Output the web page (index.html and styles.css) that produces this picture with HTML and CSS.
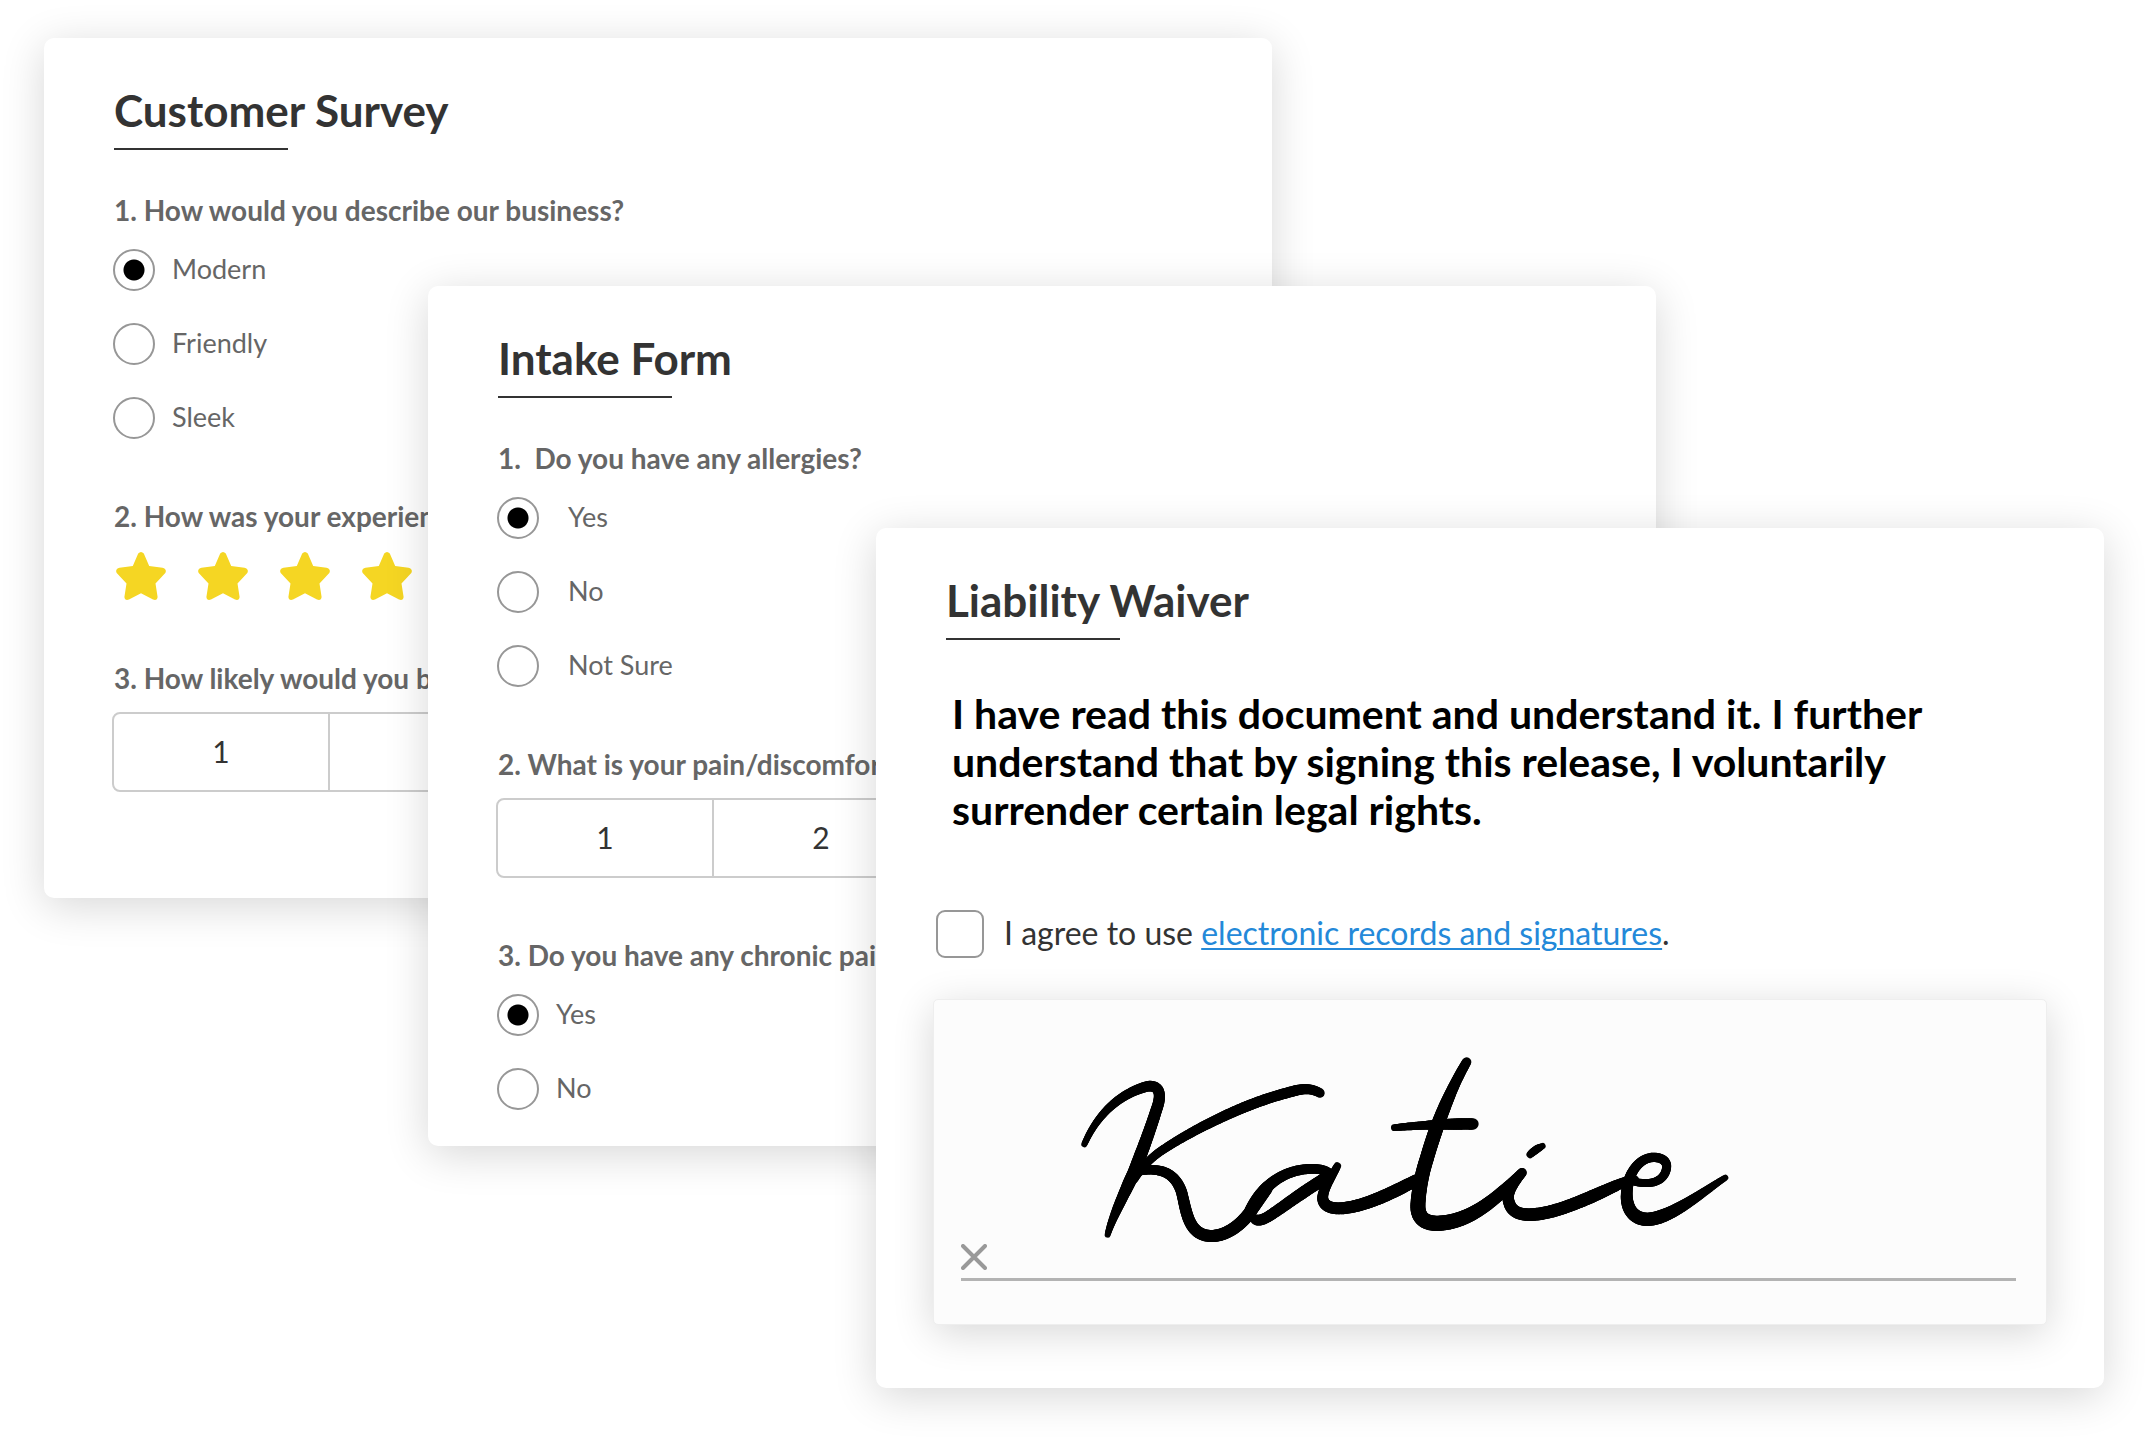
FILE: index.html
```html
<!DOCTYPE html>
<html lang="en">
    <head>
        <meta charset="UTF-8" />
        <meta name="viewport" content="width=device-width, initial-scale=1.0" />
        <title>Forms</title>
        <link rel="stylesheet" href="styles.css">
    </head>
    <body>
        <svg class="defs" aria-hidden="true">
            <symbol id="star" viewBox="0 0 50 48">
                <path d="M22.2 1.6Q25-1.4 27.8 1.6L33.2 14L46.5 15.7Q51.2 17 49.3 21L39.5 31.4L41.6 45Q41.2 49 37 47.6L25 41.2L13 47.6Q8.8 49 8.4 45L10.5 31.4L.7 21Q-1.2 17 3.5 15.7L16.8 14Z" />
            </symbol>
        </svg>

        <main class="stack">
            <form class="card survey">
                <h2 class="title">Customer Survey</h2>
                <fieldset class="question">
                    <legend>1. How would you describe our business?</legend>
                    <div class="options">
                        <label class="option"><input type="radio" name="style" checked /> Modern</label>
                        <label class="option"><input type="radio" name="style" /> Friendly</label>
                        <label class="option"><input type="radio" name="style" /> Sleek</label>
                    </div>
                </fieldset>
                <fieldset class="question">
                    <legend>2. How was your experien</legend>
                    <div class="stars">
                        <button type="button" class="star" aria-label="1 star"><svg><use href="#star" /></svg></button>
                        <button type="button" class="star" aria-label="2 stars"><svg><use href="#star" /></svg></button>
                        <button type="button" class="star" aria-label="3 stars"><svg><use href="#star" /></svg></button>
                        <button type="button" class="star" aria-label="4 stars"><svg><use href="#star" /></svg></button>
                    </div>
                </fieldset>
                <fieldset class="question">
                    <legend>3. How likely would you b</legend>
                    <div class="scale">
                        <button type="button">1</button>
                    </div>
                </fieldset>
            </form>

            <form class="card intake">
                <h2 class="title">Intake Form</h2>
                <fieldset class="question">
                    <legend>1.&nbsp; Do you have any allergies?</legend>
                    <div class="options wide">
                        <label class="option"><input type="radio" name="allergies" checked /> Yes</label>
                        <label class="option"><input type="radio" name="allergies" /> No</label>
                        <label class="option"><input type="radio" name="allergies" /> Not Sure</label>
                    </div>
                </fieldset>
                <fieldset class="question">
                    <legend>2. What is your pain/discomfor</legend>
                    <div class="scale">
                        <button type="button">1</button>
                        <button type="button">2</button>
                    </div>
                </fieldset>
                <fieldset class="question">
                    <legend>3. Do you have any chronic pai</legend>
                    <div class="options">
                        <label class="option"><input type="radio" name="chronic" checked /> Yes</label>
                        <label class="option"><input type="radio" name="chronic" /> No</label>
                    </div>
                </fieldset>
            </form>

            <form class="card waiver">
                <h2 class="title">Liability Waiver</h2>
                <p class="statement">I have read this document and understand it. I further understand that by signing this release, I voluntarily surrender certain legal rights.</p>
                <div class="agree">
                    <input type="checkbox" id="agree" />
                    <label for="agree">I agree to use <a href="#">electronic records and signatures</a>.</label>
                </div>
                <div class="signature">
                    <svg class="ink" id="ink" viewBox="0 0 2070 720" role="img" aria-label="Signature"></svg>
                    <div class="sign-line">
                        <button type="button" class="clear" aria-label="Clear signature">
                            <svg viewBox="0 0 26 26"><path d="M2 2L24 24M24 2L2 24" /></svg>
                        </button>
                    </div>
                </div>
            </form>
        </main>

        <script src="signature.js"></script>
    </body>
</html>
```
FILE: signature.js
```js
const SVG = "http://www.w3.org/2000/svg";
const ink = document.getElementById("ink");

// each pen stroke: its path and the pen widths spread evenly along it
const strokes = [
    ["M73 346C110 260 175 195 262 172C305 166 303 205 290 240C268 310 245 370 222 430C190 500 155 570 143 617", [18, 22, 27, 31, 34, 36, 38, 38, 30, 18]],
    ["M780 192C745 172 715 182 680 192C560 222 400 300 300 368C265 393 238 425 222 452", [28, 32, 32, 32, 31, 29, 27, 25, 24]],
    ["M228 428C300 412 345 430 365 490C380 550 385 618 452 621C500 622 545 585 570 550C600 480 660 425 745 420C780 418 800 424 808 434", [26, 30, 33, 35, 36, 37, 38, 36, 32, 30, 28]],
    ["M573 545L620 477", [38, 38]],
    ["M587 572C615 583 655 535 800 445", [32, 34, 36, 36]],
    ["M832 411C812 450 788 480 788 508C790 530 810 539 842 538C910 534 990 495 1070 453", [22, 28, 34, 36, 37, 38, 38, 36]],
    ["M1220 99C1160 200 1120 320 1100 390C1080 450 1072 520 1074 540C1078 572 1100 583 1132 583C1230 580 1310 510 1386 431", [28, 32, 38, 42, 42, 43, 45, 46, 44, 40, 36, 28]],
    ["M1003 296C1090 288 1170 284 1239 285", [20, 23, 26, 31, 34, 34]],
    ["M1386 431C1345 480 1340 500 1347 520C1355 550 1380 557 1410 557C1490 555 1590 505 1690 460C1705 454 1715 452 1725 452", [28, 33, 36, 38, 38, 38, 38, 34, 24]],
    ["M1410 377Q1425 362 1448 351", [20, 24, 24, 18]],
    ["M1704 450C1720 460 1745 463 1765 462C1800 460 1820 438 1820 410C1818 392 1800 385 1780 385C1740 387 1712 425 1704 465C1690 530 1715 571 1763 571C1830 568 1920 495 1996 446", [22, 24, 26, 28, 28, 30, 34, 38, 40, 40, 36, 30, 24, 18]],
];

function widthAt(widths, t) {
    const pos = t * (widths.length - 1);
    const i = Math.min(Math.floor(pos), widths.length - 2);
    return widths[i] + (widths[i + 1] - widths[i]) * (pos - i);
}

strokes.forEach(([d, widths]) => {
    const path = document.createElementNS(SVG, "path");
    path.setAttribute("d", d);
    const length = path.getTotalLength();
    const steps = Math.ceil(length / 5);

    let from = path.getPointAtLength(0);
    for (let i = 1; i <= steps; i++) {
        const to = path.getPointAtLength((length * i) / steps);
        const line = document.createElementNS(SVG, "line");
        line.setAttribute("x1", from.x);
        line.setAttribute("y1", from.y);
        line.setAttribute("x2", to.x);
        line.setAttribute("y2", to.y);
        line.setAttribute("stroke-width", widthAt(widths, i / steps));
        ink.appendChild(line);
        from = to;
    }
});
```
FILE: styles.css
```css
* {
    box-sizing: border-box;
}
body {
    margin: 0;
    background: #fff;
    font-family: Lato, "Open Sans", sans-serif;
    color: #333;
}
.defs {
    display: none;
}

/* the three cards share one grid row and overlap */
.stack {
    display: grid;
    grid-template-columns: 384fr 448fr 396fr 384fr 448fr;
    align-items: start;
    padding: 38px 44px 50px;
}
.card {
    grid-row: 1;
    min-width: 0;
    min-height: 860px;
    padding: 47px 78px 36px 70px;
    background: #fff;
    border-radius: 10px;
    box-shadow: 0 8px 44px rgba(0, 0, 0, 0.16);
}
.survey {
    grid-column: 1 / 4;
}
.intake {
    grid-column: 2 / 5;
    margin-top: 248px;
}
.waiver {
    grid-column: 3 / 6;
    margin-top: 490px;
}

.title {
    margin: 0 0 44px;
    font-size: 44px;
    line-height: 50px;
    font-weight: 700;
}
.title::after {
    content: "";
    display: block;
    width: 174px;
    height: 2px;
    margin-top: 13px;
    background: #333;
}

.question {
    margin: 0 0 61px;
    padding: 0;
    border: 0;
    min-width: 0;
}
.question:last-child {
    margin-bottom: 0;
}
.question legend {
    padding: 0;
    font-size: 28px;
    line-height: 32px;
    font-weight: 700;
    color: #666;
    white-space: nowrap;
}

.options {
    display: grid;
    gap: 32px;
    margin: 23px 0 0 -1px;
}
.option {
    display: flex;
    align-items: flex-start;
    gap: 17px;
    font-size: 27px;
    line-height: 40px;
    color: #666;
}
.wide .option {
    gap: 29px;
}
.option input {
    appearance: none;
    width: 42px;
    height: 42px;
    margin: 0;
    border: 2px solid #979797;
    border-radius: 50%;
    background: #fff;
}
.option input:checked {
    background: radial-gradient(circle, #000 10px, #fff 11px);
}

.stars {
    display: flex;
    gap: 32px;
    margin-top: 20px;
    padding: 0 0 1px 2px;
}
.star {
    width: 50px;
    height: 48px;
    padding: 0;
    border: 0;
    background: none;
    cursor: pointer;
}
.star svg {
    display: block;
    width: 50px;
    height: 48px;
    fill: #f5d623;
}

.scale {
    display: flex;
    margin: 18px -2px 0;
    border: 2px solid #ccc;
    border-radius: 8px;
}
.scale button {
    width: 216px;
    height: 76px;
    padding: 0 0 2px;
    border: 0;
    border-right: 2px solid #ccc;
    background: none;
    font: inherit;
    font-size: 30px;
    color: #333;
    cursor: pointer;
}

.waiver {
    padding: 47px 57px 62px;
}
.waiver .title {
    margin: 0 13px 50px;
}
.statement {
    margin: 0 19px 75px;
    font-size: 41px;
    line-height: 48px;
    font-weight: 700;
    color: #000;
}
.agree {
    display: flex;
    align-items: center;
    gap: 20px;
    margin: 0 3px 41px;
    font-size: 32px;
    line-height: 48px;
}
.agree label {
    padding-bottom: 1px;
}
.agree input {
    appearance: none;
    flex: none;
    width: 48px;
    height: 48px;
    margin: 0;
    border: 2px solid #979797;
    border-radius: 9px;
    background: #fff;
}
.agree a {
    color: #2489d9;
    text-decoration-thickness: 2px;
    text-underline-offset: 3px;
}

.signature {
    padding: 29px 30px 43px 27px;
    border: 1px solid #eee;
    border-radius: 5px;
    background: #fcfcfc;
    box-shadow: 0 8px 40px rgba(0, 0, 0, 0.16);
}
.ink {
    display: block;
    width: 690px;
    max-width: 100%;
    margin-left: 99px;
    fill: none;
    stroke: #000;
    stroke-linecap: round;
}
.sign-line {
    margin-top: -25px;
    padding-bottom: 8px;
    border-bottom: 3px solid #b3b3b3;
}
.clear {
    display: block;
    padding: 0;
    border: 0;
    background: none;
    cursor: pointer;
}
.clear svg {
    display: block;
    width: 26px;
    height: 26px;
    stroke: #999;
    stroke-width: 4;
    stroke-linecap: round;
}
```
